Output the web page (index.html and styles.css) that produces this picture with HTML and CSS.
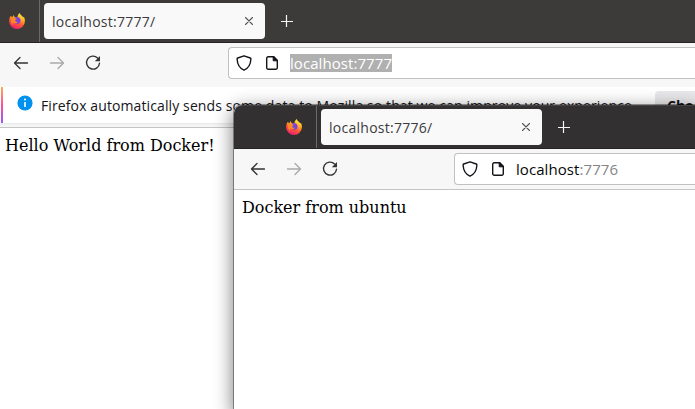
FILE: index.html
```html
<!DOCTYPE html>
<html lang="en">
<head>
<meta charset="utf-8">
<title>Desktop</title>
<link rel="stylesheet" href="styles.css">
</head>
<body>
<svg class="defs" aria-hidden="true">
  <defs>
    <linearGradient id="flame" x1=".75" y1="0" x2=".3" y2="1">
      <stop offset="0" stop-color="#fff04a"/><stop offset=".35" stop-color="#ffac22"/><stop offset=".62" stop-color="#ff5634"/><stop offset="1" stop-color="#e81b78"/>
    </linearGradient>
    <symbol id="firefox" viewBox="0 0 16 16">
      <path fill="url(#flame)" d="M1.6 3.1 3.5 4.2 4.3 2l1.4 2 2.500.4C8.700 2.400 9.600 1 10.600 0c.5 1.800 2.600 2.400 3.700 4.500l.6-.8c.8 1.600 1.100 3 1 4.600A7.900 7.900 0 0 1 8 16 7.900 7.900 0 0 1 .1 8.200C.1 6.200.7 4.500 1.600 3.100z"/>
      <path fill="#7741df" d="M5.200 5.400c.5-1 1.700-1.600 3.200-1.400 2.300.4 3.300 2 3.100 3.900a3.400 3.400 0 0 1-3.500 2.900c-2 0-3.200-1.300-3.300-2.700z"/>
      <path fill="#ff8a25" d="M2.500 4.400c1.200-.5 2.200-.3 3 .5l2.300.8c-.2 1-1.300 1-1.700 1.800.2 1.200 1.500 1.700 2.900 1-1 2.200-3.800 2.300-5 .5-.3 1.500-.1 2.300.5 3.200-2.400-1.500-3.100-4.700-2-7.800z"/>
    </symbol>
    <symbol id="back" viewBox="0 0 16 16"><path d="M14.500 8H1.600M7 2.500 1.500 8 7 13.500" fill="none" stroke="currentColor" stroke-width="1.3" stroke-linecap="round" stroke-linejoin="round"/></symbol>
    <symbol id="forward" viewBox="0 0 16 16"><path d="M1.500 8h12.900M9 2.500 14.500 8 9 13.500" fill="none" stroke="currentColor" stroke-width="1.3" stroke-linecap="round" stroke-linejoin="round"/></symbol>
    <symbol id="reload" viewBox="0 0 16 16"><path d="M12.600 3A6.500 6.500 0 1 0 14.500 8.200" fill="none" stroke="currentColor" stroke-width="1.4" stroke-linecap="round"/><path d="M15 1v5.200H9.800z" fill="currentColor"/></symbol>
    <symbol id="close" viewBox="0 0 8 8"><path d="m.5.5 7 7m0-7-7 7" stroke="currentColor" stroke-width="1.1" stroke-linecap="round"/></symbol>
    <symbol id="plus" viewBox="0 0 12 12"><path d="M5.500 0v12M0 6.500h12" stroke="currentColor" stroke-width="1.2"/></symbol>
    <symbol id="shield" viewBox="0 0 16 16"><path d="M8 .8 14.300 3c.5.2.6.5.6 1C14.700 8.600 12.500 13.200 8 15.200 3.500 13.200 1.300 8.600 1.100 4c0-.5.1-.8.6-1z" fill="none" stroke="currentColor" stroke-width="1.4" stroke-linejoin="round"/></symbol>
    <symbol id="page" viewBox="0 0 12 14"><path d="M2.200.7h5.600l3.500 3.500v7.600a1.500 1.500 0 0 1-1.500 1.500H2.200A1.500 1.500 0 0 1 .7 11.800V2.200A1.500 1.500 0 0 1 2.200.7z" fill="none" stroke="currentColor" stroke-width="1.4"/><path d="M7.200.5v4.300h4.300z" fill="currentColor" stroke="currentColor" stroke-linejoin="round"/></symbol>
  </defs>
</svg>

<main class="window">
  <header class="tabs">
    <div class="pinned"><svg class="fox"><use href="#firefox"/></svg></div>
    <div class="tab"><span class="label">localhost:7777/</span><svg class="close"><use href="#close"/></svg></div>
    <svg class="plus"><use href="#plus"/></svg>
  </header>
  <nav class="toolbar">
    <svg class="nav"><use href="#back"/></svg>
    <svg class="nav off"><use href="#forward"/></svg>
    <svg class="nav"><use href="#reload"/></svg>
    <div class="url"><svg class="shield"><use href="#shield"/></svg><svg class="page"><use href="#page"/></svg><span class="address selected">localhost:7777</span></div>
  </nav>
  <section class="notice">
    <svg class="info" viewBox="0 0 16 16"><circle cx="8" cy="8" r="7.600" fill="#0090ed"/><path d="M8 7v5" stroke="#fff" stroke-width="1.600"/><circle cx="8" cy="4.600" r="1" fill="#fff"/></svg>
    <span class="message">Firefox automatically sends some data to Mozilla so that we can improve your experience.</span>
    <button class="choose">Choose</button>
  </section>
  <article class="content">Hello World from Docker!</article>
</main>

<main class="window front">
  <header class="tabs">
    <div class="pinned"><svg class="fox"><use href="#firefox"/></svg></div>
    <div class="tab"><span class="label">localhost:7776/</span><svg class="close"><use href="#close"/></svg></div>
    <svg class="plus"><use href="#plus"/></svg>
  </header>
  <nav class="toolbar">
    <svg class="nav"><use href="#back"/></svg>
    <svg class="nav off"><use href="#forward"/></svg>
    <svg class="nav"><use href="#reload"/></svg>
    <div class="url"><svg class="shield"><use href="#shield"/></svg><svg class="page"><use href="#page"/></svg><span class="address">localhost<span class="port">:7776</span></span></div>
  </nav>
  <article class="content">Docker from ubuntu</article>
</main>
</body>
</html>
```
FILE: styles.css
```css
* { box-sizing: border-box; }
body {
  margin: 0;
  width: 695px;
  height: 409px;
  position: relative;
  overflow: hidden;
  background: #fff;
  font-family: "Open Sans", "Noto Sans", sans-serif;
  color: #15141a;
}
svg { display: block; flex: none; }
.defs { position: absolute; width: 0; height: 0; }
.window { height: 409px; background: #fff; overflow: hidden; }
.tabs {
  display: flex;
  height: 43px;
  padding-top: 3px;
  background: #3d3b3a;
  border-bottom: 1px solid #252324;
}
.pinned {
  width: 40px;
  margin: -3px 4px 0 0;
  padding: 13px 0 0 9px;
  border-right: 1px solid #6b6969;
}
.fox { width: 16px; height: 16px; }
.tab {
  display: flex;
  align-items: center;
  justify-content: space-between;
  width: 221px;
  height: 36px;
  padding: 0 12px 0 8px;
  border-radius: 4px;
  background: #f9f9fa;
  color: #3c3b3d;
  font-size: 14px;
  white-space: nowrap;
}
.label { letter-spacing: .27px; }
.close { width: 8px; height: 8px; color: #555; }
.plus { width: 12px; height: 12px; margin: 12px 0 0 16px; color: #f5f5f5; }
.toolbar {
  display: flex;
  align-items: center;
  height: 44px;
  padding: 0 0 4px 13px;
  background: #f7f7f7;
}
.nav { width: 16px; height: 16px; margin-right: 20px; color: #343335; }
.off { color: #aaa; }
.url {
  display: flex;
  align-items: center;
  flex: 1;
  height: 32px;
  margin-left: 107px;
  padding-left: 7px;
  border: 1px solid #c1c1c2;
  border-right: 0;
  border-radius: 4px 0 0 4px;
  background: #fff;
}
.shield { width: 16px; height: 16px; }
.page { width: 12px; height: 14px; margin: 0 12px 0 14px; }
.address { font-size: 15px; line-height: 18px; letter-spacing: .07px; white-space: nowrap; color: #080808; }
.selected { background: #b0b0b0; color: #fff; }
.port { color: #858585; }
.notice {
  display: flex;
  align-items: center;
  height: 36px;
  margin-left: 1px;
  padding-left: 14px;
  border-left: 2px solid;
  border-image: linear-gradient(#ffb050, #ff4e9b 50%, #9059ff) 1;
  white-space: nowrap;
}
.info { width: 16px; height: 16px; margin: -5px 8px 0 0; }
.message { flex: none; width: 614px; font-size: 14px; letter-spacing: .11px; }
.choose {
  flex: 1;
  min-width: 0;
  height: 28px;
  border: 0;
  border-radius: 4px 0 0 4px;
  padding: 0 0 0 12px;
  overflow: hidden;
  background: #e8e8ea;
  color: #15141a;
  font: bold 14px "Open Sans", sans-serif;
  text-align: left;
}
.content {
  padding: 8px 5px;
  font: 16px/19px "DejaVu Serif", serif;
  color: #000;
  white-space: nowrap;
}
.notice + .content {
  padding-top: 13px;
  background: linear-gradient(#e8e8e8, #f4f4f4 2px, #f7f7f7 4px, #c4c4c4 4px, #c4c4c4 5px, #fff 5px);
}
.front {
  position: absolute;
  left: 234px;
  top: 105px;
  width: 461px;
  height: 304px;
  border-radius: 8px 0 0;
  box-shadow: 0 0 0 1px rgba(0,0,0,.36), 0 5px 18px 2px rgba(0,0,0,.48);
}
.front .tabs {
  height: 44px;
  background: #323031;
  border-top: 1px solid #454344;
  border-radius: 8px 0 0;
}
.front .pinned { width: 83px; padding-left: 52px; }
.front .toolbar { height: 41px; padding: 0 0 0 16px; border-bottom: 1px solid #c4c4c4; }
.front .url { margin-left: 96px; }
.front .content { padding: 8px; }
```
